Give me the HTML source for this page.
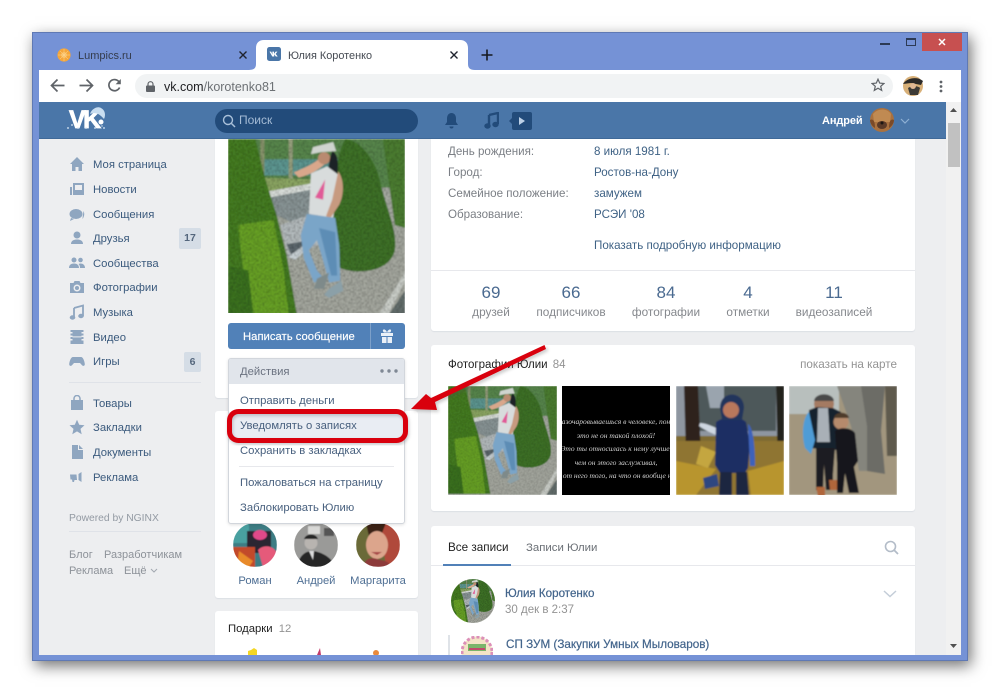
<!DOCTYPE html>
<html lang="ru"><head><meta charset="utf-8"><title>Юлия Коротенко</title>
<style>
*{box-sizing:border-box}
html,body{margin:0;padding:0;width:1000px;height:694px;overflow:hidden;background:#fff;font-family:"Liberation Sans","DejaVu Sans",sans-serif;font-size:12px;color:#3f5e80}
.a{position:absolute}
.t{position:absolute;white-space:nowrap;line-height:16px;height:16px;margin-top:1px}
.m{left:93px;color:#3b5a7d;font-size:11.3px}
.card{position:absolute;background:#fff;border-radius:3px;box-shadow:0 1px 1px #dcdfe4}
.g{color:#7b7f85;font-size:11.6px}
.v{color:#3f6285;font-size:11.6px}
.c{transform:translateX(-50%);text-align:center}
.n{font-size:17px;color:#4a6a90;margin-top:0}
.l{color:#85888d;font-size:11.8px;margin-top:0}
.i{color:#48607e;font-size:11.3px;left:240px}
.f{color:#4f6f94;font-size:11.2px}
svg{position:absolute;display:block;overflow:hidden}
</style></head><body>
<svg width="0" height="0" style="position:absolute"><defs>
<filter id="b1"><feGaussianBlur stdDeviation="0.8"/></filter>
<filter id="b2"><feGaussianBlur stdDeviation="0.5"/></filter>
<filter id="b3"><feGaussianBlur stdDeviation="1.6"/></filter>
<filter id="nz" x="0" y="0" width="100%" height="100%"><feTurbulence type="fractalNoise" baseFrequency=".55" numOctaves="2" seed="4"/><feColorMatrix values="0 0 0 0 0  0 0 0 0 0  0 0 0 0 0  2.4 0 0 0 -.9"/></filter>
<symbol id="woman" viewBox="0 0 175 175">
<g filter="url(#b1)">
<rect width="175" height="175" fill="#a9ada4"/>
<rect width="175" height="48" fill="#5a8a4e"/>
<rect x="28" y="20" width="85" height="16" fill="#5f9a94"/>
<rect x="32" y="0" width="4" height="40" fill="#8d9a70"/>
<rect x="60" y="0" width="4" height="40" fill="#9aa380"/>
<path d="M28 38L85 40 85 48 35 52Z" fill="#8faa65"/>
<path d="M38 55L80 46 110 50 110 70 62 82 48 75Z" fill="#8c9899"/>
<path d="M38 52L82 44 82 50 40 58Z" fill="#dfe4e0"/>
<path d="M52 85L100 68 100 100 60 118Z" fill="#b8bfc1"/>
<path d="M58 104L80 100 80 108 64 118Z" fill="#5e696f"/>
<path d="M60 116L82 100 82 105 66 120Z" fill="#cfd8dc"/>
<path d="M60 118L120 130 175 88 175 175 68 175Z" fill="#a8aba2"/>
<path d="M148 175L175 132 175 140 158 175Z" fill="#d0d4ce"/>
<path d="M158 175L175 150 175 175Z" fill="#66716f"/>
<path d="M153 0L175 0 175 88 165 85 160 50Z" fill="#4d8032"/>
<path d="M116 0C128 0 145 18 150 40 155 65 168 90 165 110 160 132 128 134 112 128 100 122 100 90 103 60 106 30 110 10 116 0Z" fill="#3f7428"/>
<path d="M0 0L27 0 37 40 48 75 58 115 68 173 0 173Z" fill="#467f22"/>
<path d="M10 85L45 80 55 130 60 173 20 173Z" fill="#6aa526"/>
<path d="M0 125L20 130 25 173 0 173Z" fill="#3c7420"/>
<rect width="175" height="175" filter="url(#nz)" opacity=".3"/>
<path d="M92 18C85 25 72 30 65 33L70 38C80 36 92 30 100 20Z" fill="#d9a78b"/>
<path d="M84 8L104 3 107 12 92 13 82 15Z" fill="#cfd4cf"/>
<circle cx="95" cy="19" r="6" fill="#b98a6f"/>
<path d="M103 12C108 14 110 22 108 35 106 42 100 46 97 44 100 30 99 22 103 12Z" fill="#1f2328"/>
<path d="M82 34L98 27 110 36 104 78 80 74Z" fill="#d8dcdc"/>
<path d="M86 58L96 40 94 60Z" fill="#e05a98"/>
<path d="M109 32C115 40 115 55 110 65L100 80 97 76 103 60Z" fill="#c79a80"/>
<path d="M78 74L106 78 110 105 111 140 100 142 94 120 88 100 80 110 88 130 95 138 85 142 75 118 72 95Z" fill="#7aa5c8"/>
<path d="M90 88L106 92 108 135 102 135Z" fill="#5d8db5"/>
<path d="M88 138L100 132 95 148 85 148Z" fill="#7e8a8a"/>
<path d="M100 148L112 140 114 150 100 157 95 154Z" fill="#8ba0a8"/>
</g>
</symbol>
<symbol id="hm" viewBox="0 0 16 16"><path d="M8 1L1 8h2v7h3.500v-4h3v4H13V8h2z" fill="#8fa6c0"/></symbol>
</defs></svg>

<!-- window frame -->
<div class="a" style="left:32px;top:32px;width:936px;height:629px;background:#7592d6;border:1px solid #5f79b4;box-shadow:3px 5px 14px rgba(0,0,0,.55)"></div>

<!-- tabs -->
<svg style="left:57px;top:48px" width="14" height="14" viewBox="0 0 14 14"><circle cx="7" cy="7" r="6.600" fill="#f5a63a"/><circle cx="7" cy="7" r="3" fill="#f9bd62"/><path d="M7 1v12M1 7h12M3 3l8 8M11 3l-8 8" stroke="#fcd795" stroke-width=".5"/></svg>
<div class="t" style="left:78px;top:47px;color:#343c4d;font-size:11px">Lumpics.ru</div>
<svg style="left:238px;top:50px" width="10" height="10" viewBox="0 0 10 10"><path d="M1.500 1.500l7 7M8.500 1.500l-7 7" stroke="#20242e" stroke-width="1.400"/></svg>
<svg class="a" style="left:249px;top:40px" width="226" height="31" viewBox="0 0 226 31"><path d="M0 30C5 30 7 28 7 24V8C7 3 10 0 15 0H211C216 0 219 3 219 8V24C219 28 221 30 226 30V31H0Z" fill="#fff"/></svg>
<svg style="left:267px;top:47px" width="14" height="14" viewBox="0 0 14 14"><rect width="14" height="14" rx="2.500" fill="#4a76a8"/><path d="M2.500 4.600h1.700l1.200 3V4.600H7v2.300l1.600-2.300h1.800L8.700 6.900l2 2.600H8.800L7.200 7.300v2.200H5.300z" fill="#fff"/></svg>
<div class="t" style="left:288px;top:47px;color:#454a52;font-size:10.900px">Юлия Коротенко</div>
<svg style="left:449px;top:50px" width="10" height="10" viewBox="0 0 10 10"><path d="M1.500 1.500l7 7M8.500 1.500l-7 7" stroke="#20242e" stroke-width="1.400"/></svg>
<svg style="left:481px;top:49px" width="12" height="12" viewBox="0 0 12 12"><path d="M6 .5v11M.5 6h11" stroke="#15181f" stroke-width="1.600"/></svg>

<!-- window controls -->
<div class="a" style="left:880px;top:43px;width:10px;height:2px;background:#2c3a55"></div>
<div class="a" style="left:906px;top:38px;width:10px;height:8px;border:1px solid #2c3a55;border-top-width:2px"></div>
<div class="a" style="left:922px;top:33px;width:40px;height:18px;background:#c75050"></div>
<svg style="left:937px;top:37px" width="10" height="10" viewBox="0 0 10 10"><path d="M2 2l6 6M8 2l-6 6" stroke="#fff" stroke-width="1.500"/></svg>

<!-- toolbar -->
<div class="a" style="left:39px;top:70px;width:922px;height:32px;background:#fff"></div>
<svg style="left:50px;top:78px" width="16" height="15" viewBox="0 0 16 15"><path d="M14.500 7.500H2M7.500 1.500l-6 6 6 6" fill="none" stroke="#5f6368" stroke-width="1.700"/></svg>
<svg style="left:78px;top:78px" width="16" height="15" viewBox="0 0 16 15"><path d="M1.500 7.500H14M8.500 1.500l6 6-6 6" fill="none" stroke="#5f6368" stroke-width="1.700"/></svg>
<svg style="left:107px;top:78px" width="15" height="15" viewBox="0 0 15 15"><path d="M12.600 9.500A5.600 5.600 0 1 1 11.500 3.200L13 4.600" fill="none" stroke="#5f6368" stroke-width="1.700"/><path d="M13.800 1v5.200H8.600z" fill="#5f6368"/></svg>
<div class="a" style="left:135px;top:74px;width:758px;height:24px;border-radius:12px;background:#f1f3f4"></div>
<svg style="left:146px;top:81px" width="9" height="11" viewBox="0 0 9 11"><path d="M2 5V3.200a2.500 2.500 0 0 1 5 0V5" fill="none" stroke="#5f6368" stroke-width="1.200"/><rect y="4.500" width="9" height="6.500" rx="1" fill="#5f6368"/></svg>
<div class="t" style="left:164px;top:78px;font-size:12.500px;color:#202124">vk.com<span style="color:#6d7175">/korotenko81</span></div>
<svg style="left:871px;top:78px" width="14" height="14" viewBox="0 0 14 14"><path d="M7 1.200l1.700 3.900 4.200.4-3.200 2.800 1 4.100L7 10.200l-3.700 2.200 1-4.100L1.100 5.500l4.200-.4z" fill="none" stroke="#5f6368" stroke-width="1.200"/></svg>
<svg style="left:903px;top:76px" width="20" height="20" viewBox="0 0 20 20"><circle cx="10" cy="10" r="10" fill="#d8b078"/><path d="M0 8C4 2 14 0 20 5L18 9 8 7Z" fill="#2c2a28"/><path d="M5 12c3-2 9-3 12 0l-2 7H7z" fill="#3c3a36"/><circle cx="10" cy="10" r="3" fill="#e0b894"/></svg>
<svg style="left:939px;top:80px" width="4" height="13" viewBox="0 0 4 13"><circle cx="2" cy="2" r="1.400" fill="#5f6368"/><circle cx="2" cy="6.500" r="1.400" fill="#5f6368"/><circle cx="2" cy="11" r="1.400" fill="#5f6368"/></svg>

<!-- page bg -->
<div class="a" style="left:39px;top:102px;width:922px;height:553px;background:#edeef0;overflow:hidden"></div>
<!-- scrollbar -->
<div class="a" style="left:946px;top:102px;width:15px;height:553px;background:#f1f1f1"></div>
<div class="a" style="left:948px;top:123px;width:12px;height:44px;background:#c1c1c1"></div>
<svg style="left:949px;top:107px" width="9" height="6" viewBox="0 0 9 6"><path d="M4.500 1L8 5H1z" fill="#505050"/></svg>
<svg style="left:949px;top:643px" width="9" height="6" viewBox="0 0 9 6"><path d="M4.500 5L8 1H1z" fill="#505050"/></svg>

<!-- VK header -->
<div class="a" style="left:39px;top:102px;width:907px;height:37px;background:#4a76a8;border-bottom:1px solid #3f6998"></div>
<div class="a" style="left:69px;top:107px;font:bold 25px/26px 'Liberation Sans',sans-serif;color:#fff;letter-spacing:-2.500px;-webkit-text-stroke:.8px #fff">VK</div>
<svg style="left:66px;top:106px" width="42" height="26" viewBox="0 0 42 26"><path d="M24 8C26 2 32 0 35 2 39 4 40 9 38 13 33 7 29 6 24 8Z" fill="#c8ddf0"/><circle cx="35" cy="16" r="2.500" fill="#fff"/><g fill="#dfeaf6"><circle cx="2" cy="22" r=".9"/><circle cx="6" cy="19" r=".9"/><circle cx="12" cy="22" r=".9"/><circle cx="20" cy="22" r=".9"/><circle cx="29" cy="22" r=".9"/><circle cx="38" cy="22" r=".9"/><circle cx="36" cy="20" r=".7"/></g></svg>
<div class="a" style="left:215px;top:109px;width:203px;height:24px;border-radius:12px;background:#224b7a"></div>
<svg style="left:222px;top:114px" width="14" height="14" viewBox="0 0 14 14"><circle cx="6" cy="6" r="4.500" fill="none" stroke="#a9c0d9" stroke-width="1.400"/><path d="M9.500 9.500l3.500 3.500" stroke="#a9c0d9" stroke-width="1.500"/></svg>
<div class="t" style="left:239px;top:112px;color:#a4bbd5;font-size:12px;margin-top:0">Поиск</div>
<svg style="left:444px;top:112px" width="15" height="17" viewBox="0 0 15 17"><path d="M7.500 1C4.500 1 3 3.500 3 6.500V10L1 13h13l-2-3V6.500C12 3.500 10.500 1 7.500 1Z" fill="#224b7a"/><path d="M5.500 14.500a2 2 0 0 0 4 0z" fill="#224b7a"/></svg>
<svg style="left:484px;top:112px" width="15" height="17" viewBox="0 0 15 17"><path d="M5 3l9-2v11" fill="none" stroke="#224b7a" stroke-width="2.400"/><path d="M5 3v11" stroke="#224b7a" stroke-width="2.400"/><ellipse cx="3.500" cy="14" rx="3.200" ry="2.700" fill="#224b7a"/><ellipse cx="11.500" cy="12.500" rx="3.200" ry="2.700" fill="#224b7a"/></svg>
<svg style="left:509px;top:111px" width="23" height="20" viewBox="0 0 23 20"><rect x="3" y="1" width="20" height="18" rx="2" fill="#224b7a"/><path d="M3 7L0 10l3 3z" fill="#224b7a"/><path d="M10 6l6 4-6 4z" fill="#bcd0e6"/></svg>
<div class="t" style="left:822px;top:112px;color:#fff;font-weight:bold;font-size:11px;letter-spacing:-.1px">Андрей</div>
<svg style="left:870px;top:108px" width="24" height="24" viewBox="0 0 24 24"><circle cx="12" cy="12" r="12" fill="#a9713f"/><path d="M3 6C8 0 17 0 21 6L20 14 4 14Z" fill="#c08a52"/><path d="M0 12c4-2 5 3 5 8-3-2-5-5-5-8zM24 12c-4-2-5 3-5 8 3-2 5-5 5-8z" fill="#7a4a28"/><ellipse cx="12" cy="17" rx="5" ry="4" fill="#5a3a28"/><circle cx="12" cy="15" r="1.500" fill="#1c1512"/></svg>
<svg style="left:900px;top:118px" width="10" height="6" viewBox="0 0 10 6"><path d="M1 1l4 4 4-4" fill="none" stroke="#8fb0d3" stroke-width="1.200"/></svg>

<!-- left menu -->
<svg style="left:69px;top:156px" width="16" height="16"><use href="#hm"/></svg>
<svg style="left:69px;top:181px" width="16" height="16" viewBox="0 0 16 16"><path d="M4 2h11v12H4z" fill="#8fa6c0"/><path d="M1 6h2v8H1z" fill="#8fa6c0"/><rect x="6" y="4" width="7" height="5" fill="#edeef0"/></svg>
<svg style="left:69px;top:206px" width="16" height="16" viewBox="0 0 16 16"><ellipse cx="7" cy="8" rx="6.500" ry="5" fill="#8fa6c0"/><path d="M2 12l-1 3 4-2zM14.500 5c1.500 3 .5 6-1 8 .2-3 .6-5 1-8z" fill="#8fa6c0"/></svg>
<svg style="left:69px;top:230px" width="16" height="16" viewBox="0 0 16 16"><circle cx="8" cy="5" r="3.500" fill="#8fa6c0"/><path d="M2 14c0-3.500 3-4.500 6-4.500s6 1 6 4.500z" fill="#8fa6c0"/></svg>
<svg style="left:69px;top:255px" width="16" height="16" viewBox="0 0 16 16"><circle cx="5" cy="5" r="2.500" fill="#8fa6c0"/><circle cx="11.500" cy="5" r="2.300" fill="#8fa6c0"/><path d="M0 13c0-3 2-4.500 5-4.500S10 10 10 13zM11 13c0-2-.5-3-1.500-4 2.800-1.200 6.500 0 6.500 4z" fill="#8fa6c0"/></svg>
<svg style="left:69px;top:279px" width="16" height="16" viewBox="0 0 16 16"><path d="M1 4h3.500l1-2h5l1 2H15v10H1z" fill="#8fa6c0"/><circle cx="8" cy="9" r="3.500" fill="#edeef0"/><circle cx="8" cy="9" r="2" fill="#8fa6c0"/></svg>
<svg style="left:69px;top:304px" width="16" height="16" viewBox="0 0 16 16"><path d="M5 4l9-2.500V12" fill="none" stroke="#8fa6c0" stroke-width="1.800"/><path d="M5 4v10" stroke="#8fa6c0" stroke-width="1.800"/><ellipse cx="3.500" cy="13.500" rx="2.800" ry="2.200" fill="#8fa6c0"/><ellipse cx="12" cy="12" rx="2.800" ry="2.200" fill="#8fa6c0"/></svg>
<svg style="left:69px;top:329px" width="16" height="16" viewBox="0 0 16 16"><rect x="1.500" y="1" width="13" height="14" fill="#8fa6c0"/><g fill="#edeef0"><rect x="1.500" y="3" width="2" height="1.500"/><rect x="1.500" y="6.500" width="2" height="1.500"/><rect x="1.500" y="10" width="2" height="1.500"/><rect x="12.500" y="3" width="2" height="1.500"/><rect x="12.500" y="6.500" width="2" height="1.500"/><rect x="12.500" y="10" width="2" height="1.500"/><rect x="3.500" y="7.400" width="9" height="1"/></g></svg>
<svg style="left:69px;top:353px" width="16" height="16" viewBox="0 0 16 16"><path d="M4 4h8c2 0 3.500 4 3.800 7 .2 2-1.800 2.500-3 1L11 10H5l-1.800 2c-1.200 1.500-3.200 1-3-1C.5 8 2 4 4 4Z" fill="#8fa6c0"/></svg>
<div class="t m" style="top:156px">Моя страница</div>
<div class="t m" style="top:181px">Новости</div>
<div class="t m" style="top:206px">Сообщения</div>
<div class="t m" style="top:230px">Друзья</div>
<div class="t m" style="top:255px">Сообщества</div>
<div class="t m" style="top:279px">Фотографии</div>
<div class="t m" style="top:304px">Музыка</div>
<div class="t m" style="top:329px">Видео</div>
<div class="t m" style="top:353px">Игры</div>
<div class="a" style="left:179px;top:228px;width:22px;height:21px;background:#d5dde6;border-radius:2px;color:#55677d;font-size:10.500px;font-weight:bold;line-height:21px;text-align:center">17</div>
<div class="a" style="left:184px;top:352px;width:17px;height:20px;background:#d5dde6;border-radius:2px;color:#55677d;font-size:10.500px;font-weight:bold;line-height:20px;text-align:center">6</div>
<div class="a" style="left:69px;top:382px;width:132px;height:1px;background:#dfe2e8"></div>
<svg style="left:69px;top:395px" width="16" height="16" viewBox="0 0 16 16"><path d="M2 5h12v10H2z" fill="#8fa6c0"/><path d="M5 6V3.500a3 3 0 0 1 6 0V6" fill="none" stroke="#8fa6c0" stroke-width="1.500"/></svg>
<svg style="left:69px;top:419px" width="16" height="16" viewBox="0 0 16 16"><path d="M8 .8l2.200 5 5.300.5-4 3.600 1.200 5.300L8 12.400l-4.700 2.800 1.200-5.300-4-3.600 5.300-.5z" fill="#8fa6c0"/></svg>
<svg style="left:69px;top:444px" width="16" height="16" viewBox="0 0 16 16"><path d="M3 1h6v5h5v9H3z" fill="#8fa6c0"/><path d="M10 1l4 4h-4z" fill="#8fa6c0"/></svg>
<svg style="left:69px;top:469px" width="16" height="16" viewBox="0 0 16 16"><path d="M1 5.500h6.500L8 11H5.500L5 13H3.500L3 10.500H1.500z" fill="#8fa6c0"/><path d="M9.500 5l3-2v10l-3-2z" fill="#8fa6c0"/></svg>
<div class="t m" style="top:395px">Товары</div>
<div class="t m" style="top:419px">Закладки</div>
<div class="t m" style="top:444px">Документы</div>
<div class="t m" style="top:469px">Реклама</div>
<div class="t" style="left:69px;top:510px;color:#939aa3;font-size:10.300px">Powered by NGINX</div>
<div class="a" style="left:69px;top:531px;width:132px;height:1px;background:#dfe2e8"></div>
<div class="t" style="left:69px;top:546px;color:#8d9299;font-size:11px">Блог</div>
<div class="t" style="left:104px;top:546px;color:#8d9299;font-size:11px">Разработчикам</div>
<div class="t" style="left:69px;top:562px;color:#8d9299;font-size:11px">Реклама</div>
<div class="t" style="left:124px;top:562px;color:#8d9299;font-size:11px">Ещё</div>
<svg style="left:150px;top:568px" width="8" height="5" viewBox="0 0 8 5"><path d="M1 1l3 3 3-3" fill="none" stroke="#a2a8b0"/></svg>

<!-- middle column -->
<div class="card" style="left:215px;top:139px;width:203px;height:259px;border-radius:0 0 3px 3px"></div>
<svg style="left:228px;top:139px" width="177" height="174" viewBox="0 0 175 172" preserveAspectRatio="none"><use href="#woman" width="175" height="175"/></svg>
<div class="a" style="left:228px;top:323px;width:177px;height:26px;background:#5181b8;border-radius:3px"></div>
<div class="a" style="left:370px;top:323px;width:1px;height:26px;background:#7da0c9"></div>
<div class="t" style="left:243px;top:328px;color:#fff;font-size:11.300px;-webkit-text-stroke:.15px #fff">Написать сообщение</div>
<svg style="left:381px;top:329px" width="12" height="14" viewBox="0 0 12 14"><path d="M0 4h12v3H0zM1 8h4.500v6H1zM6.500 8H11v6H6.500z" fill="#eaf0f7"/><path d="M3 3.500C1 2 2 0 3.500 .5 5 1 6 3 6 3.500 6 3 7 1 8.500 .5 10 0 11 2 9 3.500z" fill="#eaf0f7"/></svg>

<div class="card" style="left:215px;top:411px;width:203px;height:187px"></div>
<svg style="left:233px;top:523px" width="44" height="44" viewBox="0 0 44 44"><defs><clipPath id="c1"><circle cx="22" cy="22" r="22"/></clipPath></defs><g clip-path="url(#c1)"><g filter="url(#b2)"><rect width="44" height="44" fill="#3d7d84"/><path d="M0 0h16v20H0z" fill="#4aa0a0"/><path d="M14 8h24v22H14z" fill="#2a2730"/><ellipse cx="27" cy="12" rx="7" ry="5" fill="#e04a8a"/><path d="M25 27a10 9 0 1 1 17 12l-12 5z" fill="#e55a7a"/><path d="M0 24h22v20H0z" fill="#c2482c"/><path d="M6 28l14 10-4 6H4z" fill="#e88a2c"/></g></g></svg>
<svg style="left:294px;top:523px" width="44" height="44" viewBox="0 0 44 44"><defs><clipPath id="c2"><circle cx="22" cy="22" r="22"/></clipPath></defs><g clip-path="url(#c2)"><g filter="url(#b2)"><rect width="44" height="44" fill="#9a9a98"/><rect x="14" y="3" width="12" height="8" fill="#d8d8d6"/><rect x="30" y="5" width="10" height="8" fill="#555"/><circle cx="17" cy="20" r="6.500" fill="#b8b4b0"/><path d="M10 16c2-6 12-6 14 0z" fill="#282828"/><path d="M3 44C5 32 12 28 18 28s20 5 23 16z" fill="#272727"/><path d="M15 28h5l-1 9z" fill="#dcdcdc"/></g></g></svg>
<svg style="left:356px;top:523px" width="44" height="44" viewBox="0 0 44 44"><defs><clipPath id="c3"><circle cx="22" cy="22" r="22"/></clipPath></defs><g clip-path="url(#c3)"><g filter="url(#b2)"><rect width="44" height="44" fill="#6a6a38"/><path d="M24 0h20v44H30z" fill="#b04a3a"/><path d="M10 0h20l-4 10-12 8z" fill="#3a2018"/><ellipse cx="21" cy="22" rx="11" ry="14" fill="#dca58c"/><path d="M8 44c0-8 6-10 13-8s13 2 13 8z" fill="#8d3a3a"/><path d="M15 29h11l-5 3z" fill="#a84a4a"/></g></g></svg>
<div class="t c f" style="left:255px;top:572px">Роман</div>
<div class="t c f" style="left:316px;top:572px">Андрей</div>
<div class="t c f" style="left:378px;top:572px">Маргарита</div>

<div class="card" style="left:215px;top:611px;width:203px;height:44px;border-radius:3px 3px 0 0"></div>
<div class="t" style="left:228px;top:620px;color:#222;font-size:11.300px">Подарки <span style="color:#939393;margin-left:3px">12</span></div>
<svg style="left:245px;top:648px" width="140" height="7" viewBox="0 0 140 7"><path d="M3 7V3l3-1 3-2 3 2v5z" fill="#f3d624"/><path d="M72 7l3-7 1 7z" fill="#c23a6a"/><circle cx="131" cy="5" r="3" fill="#e98a3c"/></svg>

<!-- actions dropdown -->
<div class="a" style="left:228px;top:358px;width:177px;height:166px;background:#fff;border:1px solid #d2d6dc;border-radius:3px;box-shadow:0 1px 3px rgba(0,0,0,.12)"></div>
<div class="a" style="left:229px;top:359px;width:175px;height:25px;background:#e1e5eb;border-radius:2px 2px 0 0"></div>
<div class="t" style="left:240px;top:363px;color:#6b7280;font-size:11.300px">Действия</div>
<svg style="left:380px;top:369px" width="18" height="4" viewBox="0 0 18 4"><circle cx="2" cy="2" r="1.700" fill="#7f8894"/><circle cx="9" cy="2" r="1.700" fill="#7f8894"/><circle cx="16" cy="2" r="1.700" fill="#7f8894"/></svg>
<div class="a" style="left:229px;top:412px;width:175px;height:28px;background:#e9edf3"></div>
<div class="t i" style="top:392px">Отправить деньги</div>
<div class="t i" style="top:417px">Уведомлять о записях</div>
<div class="t i" style="top:442px">Сохранить в закладках</div>
<div class="a" style="left:239px;top:466px;width:155px;height:1px;background:#e7e8ec"></div>
<div class="t i" style="top:474px">Пожаловаться на страницу</div>
<div class="t i" style="top:499px">Заблокировать Юлию</div>

<!-- right column -->
<div class="card" style="left:431px;top:139px;width:484px;height:192px;border-radius:0 0 3px 3px"></div>
<div class="t g" style="left:448px;top:143px">День рождения:</div>
<div class="t v" style="left:594px;top:143px">8 июля 1981 г.</div>
<div class="t g" style="left:448px;top:164px">Город:</div>
<div class="t v" style="left:594px;top:164px">Ростов-на-Дону</div>
<div class="t g" style="left:448px;top:185px">Семейное положение:</div>
<div class="t v" style="left:594px;top:185px">замужем</div>
<div class="t g" style="left:448px;top:206px">Образование:</div>
<div class="t v" style="left:594px;top:206px">РСЭИ '08</div>
<div class="t v" style="left:594px;top:237px">Показать подробную информацию</div>
<div class="a" style="left:431px;top:270px;width:484px;height:1px;background:#e7e8ec"></div>
<div class="t c n" style="left:491px;top:285px">69</div><div class="t c l" style="left:491px;top:304px">друзей</div>
<div class="t c n" style="left:571px;top:285px">66</div><div class="t c l" style="left:571px;top:304px">подписчиков</div>
<div class="t c n" style="left:666px;top:285px">84</div><div class="t c l" style="left:666px;top:304px">фотографии</div>
<div class="t c n" style="left:748px;top:285px">4</div><div class="t c l" style="left:748px;top:304px">отметки</div>
<div class="t c n" style="left:834px;top:285px">11</div><div class="t c l" style="left:834px;top:304px">видеозаписей</div>

<div class="card" style="left:431px;top:345px;width:484px;height:166px"></div>
<div class="t" style="left:448px;top:356px;color:#222;font-size:11.500px">Фотографии Юлии <span style="color:#939393;margin-left:2px">84</span></div>
<div class="t" style="right:103px;top:356px;color:#939393;font-size:11.700px">показать на карте</div>
<svg style="left:448px;top:386px" width="109" height="109" viewBox="0 0 175 175"><use href="#woman" width="175" height="175"/></svg>
<div class="a" style="left:562px;top:386px;width:108px;height:109px;background:#000;overflow:hidden;color:#cfcfcf;font:italic 7.500px/13.500px 'Liberation Serif',serif;text-align:center;padding-top:29px;white-space:nowrap"><div style="margin-left:-12px;width:132px">разочаровываешься в человеке, пони<br>это не он такой плохой!<br>Это ты относилась к нему лучше,<br>чем он этого заслуживал,<br>а от него того, на что он вообще не</div></div>
<svg style="left:676px;top:386px" width="108" height="109" viewBox="0 0 108 109"><g filter="url(#b1)"><rect width="108" height="109" fill="#7e6a32"/><rect width="108" height="50" fill="#8e96a0"/><path d="M22 0h78v45H22z" fill="#4e585a"/><path d="M30 0h18v22H34z" fill="#9aa4ae"/><path d="M8 0h14l3 70H10z" fill="#2e221c"/><path d="M100 0h8v85h-6z" fill="#24201c"/><path d="M0 55h108v54H0z" fill="#8f7530"/><path d="M0 75l40 8-20 26H0zM72 85l36-10v34H75z" fill="#b8952f"/><path d="M25 60l15 6-8 16-12-4z" fill="#c4a640"/><path d="M40 42c-6-3-12-5-16-5l-1 3c4 3 12 7 17 9z" fill="#cdd6e0"/><path d="M40 36c8-6 24-6 30 0l4 22-2 24-3 5H44l-5-8z" fill="#1d2f63"/><path d="M72 38c5 3 7 22 7 42h-5z" fill="#3d62ba"/><path d="M44 22c0-18 24-18 24 0l-2 12H46z" fill="#23345c"/><ellipse cx="55" cy="24" rx="8" ry="8" fill="#b9785c"/><path d="M44 86h12v23H43zM60 86h11l2 23H60z" fill="#1c2540"/><path d="M27 92l14-4 2 12-14 3z" fill="#2f4680"/></g></svg>
<svg style="left:789px;top:386px" width="108" height="109" viewBox="0 0 108 109"><g filter="url(#b1)"><rect width="108" height="109" fill="#a2967e"/><rect width="50" height="28" fill="#b8bfbd"/><path d="M48 0H76L82 40 90 85 70 85 62 40z" fill="#85857d"/><path d="M72 0h24L92 45 96 88 78 85 78 40z" fill="#6c6c66"/><path d="M96 0h12v70H98z" fill="#5e5a4e"/><path d="M25 18c0-11 20-11 20 0l-2 10H27z" fill="#a47a62"/><path d="M25 15c1-9 19-9 20 0z" fill="#4a4a4a"/><path d="M20 24l8-3 16 1 8 4-4 38-28-2z" fill="#15212f"/><path d="M29 22l10 0 2 34-13 0z" fill="#a9b0b7"/><path d="M20 26c-6 5-8 22-4 36l6 6 4-14z" fill="#4f9cd6"/><path d="M27 62h19l-2 26v16H37l-2-26-1 26H27z" fill="#1a1a20"/><path d="M27 101h9l0 9H29zM40 94h8l0 10H41z" fill="#b0663a"/><circle cx="52" cy="36" r="7.500" fill="#b58a6c"/><path d="M45 32c1-7 14-7 15 0z" fill="#4e3a2a"/><path d="M46 45c4-4 16-4 20 2l3 28-4 6 5 26H60l-4-20-2 20h-6l0-30z" fill="#16161b"/></g></svg>

<div class="card" style="left:431px;top:526px;width:484px;height:129px;border-radius:3px 3px 0 0"></div>
<div class="t" style="left:448px;top:539px;color:#222;font-size:11.700px">Все записи</div>
<div class="t" style="left:526px;top:539px;color:#6a6f75;font-size:11.400px">Записи Юлии</div>
<div class="a" style="left:431px;top:565px;width:484px;height:1px;background:#e7e8ec"></div>
<div class="a" style="left:443px;top:564px;width:68px;height:2px;background:#5181b8"></div>
<svg style="left:884px;top:540px" width="15" height="15" viewBox="0 0 15 15"><circle cx="6.500" cy="6.500" r="5" fill="none" stroke="#b3bcc8" stroke-width="1.600"/><path d="M10 10l4 4" stroke="#b3bcc8" stroke-width="1.800"/></svg>
<svg style="left:451px;top:579px" width="44" height="44" viewBox="0 0 175 175"><defs><clipPath id="c4"><circle cx="87.500" cy="87.500" r="87.500"/></clipPath></defs><g clip-path="url(#c4)"><use href="#woman" width="175" height="175"/></g></svg>
<div class="t" style="left:505px;top:585px;color:#42648b;font-size:11.600px;-webkit-text-stroke:.2px #42648b">Юлия Коротенко</div>
<div class="t" style="left:505px;top:601px;color:#939393;font-size:11.500px">30 дек в 2:37</div>
<svg style="left:883px;top:590px" width="14" height="8" viewBox="0 0 14 8"><path d="M1 1l6 5.500L13 1" fill="none" stroke="#c4cdd8" stroke-width="1.500"/></svg>
<div class="a" style="left:448px;top:635px;width:2px;height:20px;background:#dfe3e8"></div>
<svg style="left:461px;top:636px" width="32" height="19" viewBox="0 0 32 19"><circle cx="16" cy="16" r="15.500" fill="#f3e4c6"/><circle cx="16" cy="16" r="15" fill="none" stroke="#dc8fb8" stroke-width="3" stroke-dasharray="3 2"/><rect x="7" y="8" width="18" height="7" fill="#7ab56a"/><path d="M8 13h16" stroke="#c04a6a" stroke-width="2"/></svg>
<div class="t" style="left:506px;top:636px;color:#42648b;font-size:11.700px;-webkit-text-stroke:.2px #42648b">СП ЗУМ (Закупки Умных Мыловаров)</div>

<!-- window bottom edge overlay -->
<div class="a" style="left:32px;top:655px;width:936px;height:6px;background:#7592d6;border:1px solid #5f79b4;border-top:0"></div>

<!-- annotation -->
<svg style="left:0;top:0;pointer-events:none" width="1000" height="694" viewBox="0 0 1000 694">
<rect x="229.500" y="411.500" width="176" height="29" rx="9" fill="none" stroke="#6a6a72" stroke-width="5" opacity=".35" filter="url(#b3)" transform="translate(1 2)"/>
<rect x="229.500" y="411.500" width="176" height="29" rx="9" fill="none" stroke="#d9000d" stroke-width="5"/>
<path d="M411 409L426 394 431 398 544.500 345 546 349 435 402 437 410Z" fill="#555" opacity=".3" filter="url(#b3)" transform="translate(2 2)"/>
<path d="M411 409L426 394 431 398 544.500 345 546 349 435 402 437 410Z" fill="#d9000d"/>
</svg>
</body></html>
